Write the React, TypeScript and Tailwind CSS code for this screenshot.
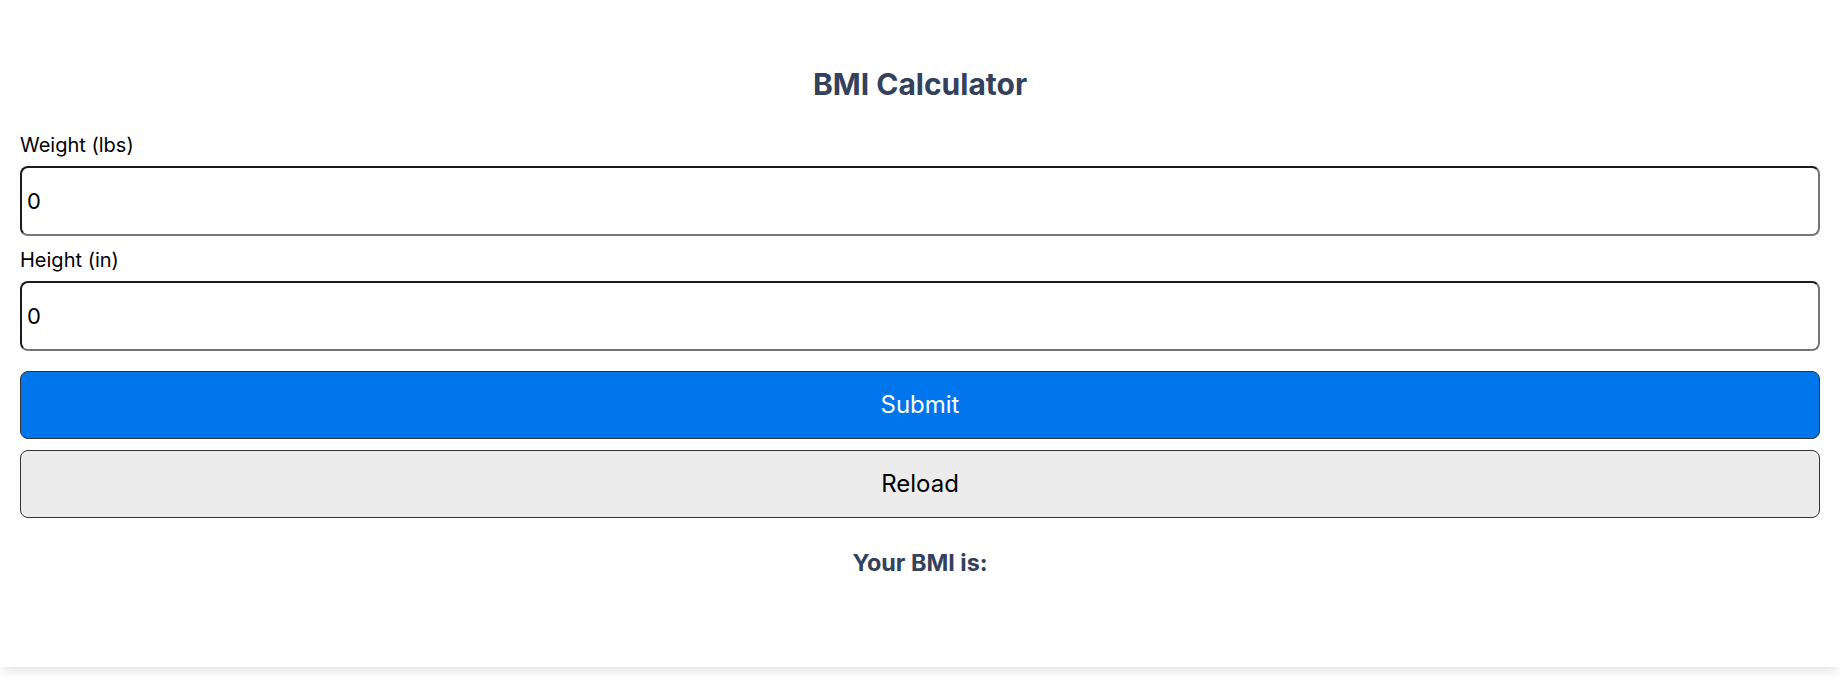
import React, { useState } from 'react';

export default function App() {
  const [weight, setWeight] = useState('0');
  const [height, setHeight] = useState('0');
  const [bmi, setBmi] = useState('');

  const submit = () => {
    const w = parseFloat(weight);
    const h = parseFloat(height);
    if (!w || !h) return;
    setBmi(((w / (h * h)) * 703).toFixed(1));
  };

  return (
    <div className="min-h-screen bg-white font-['Inter','Liberation_Sans',sans-serif]">
      {/* Card */}
      <div className="bg-white px-5 pt-[66px] pb-[90px] shadow-[0_5px_10px_-2px_rgba(0,0,0,0.12)]">
        <h2 className="text-center text-[30px] font-bold leading-[36px] text-[#33415c]">
          BMI Calculator
        </h2>

        <form
          className="mt-[31px] flex flex-col"
          onSubmit={(e) => {
            e.preventDefault();
            submit();
          }}
        >
          <label className="mb-[9px] text-[20px] leading-[24px] text-black">Weight (lbs)</label>
          <input
            value={weight}
            onChange={(e) => setWeight(e.target.value)}
            className="h-[70px] w-full rounded-lg border-2 border-t-[#1b1b1b] border-l-[#1b1b1b] border-b-[#767676] border-r-[#767676] bg-white px-[5px] text-[22px] text-black outline-none"
          />

          <label className="mt-3 mb-[9px] text-[20px] leading-[24px] text-black">Height (in)</label>
          <input
            value={height}
            onChange={(e) => setHeight(e.target.value)}
            className="h-[70px] w-full rounded-lg border-2 border-t-[#1b1b1b] border-l-[#1b1b1b] border-b-[#767676] border-r-[#767676] bg-white px-[5px] text-[22px] text-black outline-none"
          />

          <button
            type="submit"
            className="mt-5 h-[68px] w-full rounded-lg border border-[#333333] bg-[#0075ec] text-[24px] text-white"
          >
            Submit
          </button>
          <button
            type="button"
            onClick={() => {
              setWeight('0');
              setHeight('0');
              setBmi('');
            }}
            className="mt-[11px] h-[68px] w-full rounded-lg border border-[#333333] bg-[#ececec] text-[24px] text-black"
          >
            Reload
          </button>
        </form>

        <h3 className="mt-[31px] text-center text-[23.4px] font-bold leading-[28px] text-[#33415c]">
          Your BMI is: {bmi}
        </h3>
      </div>
    </div>
  );
}
